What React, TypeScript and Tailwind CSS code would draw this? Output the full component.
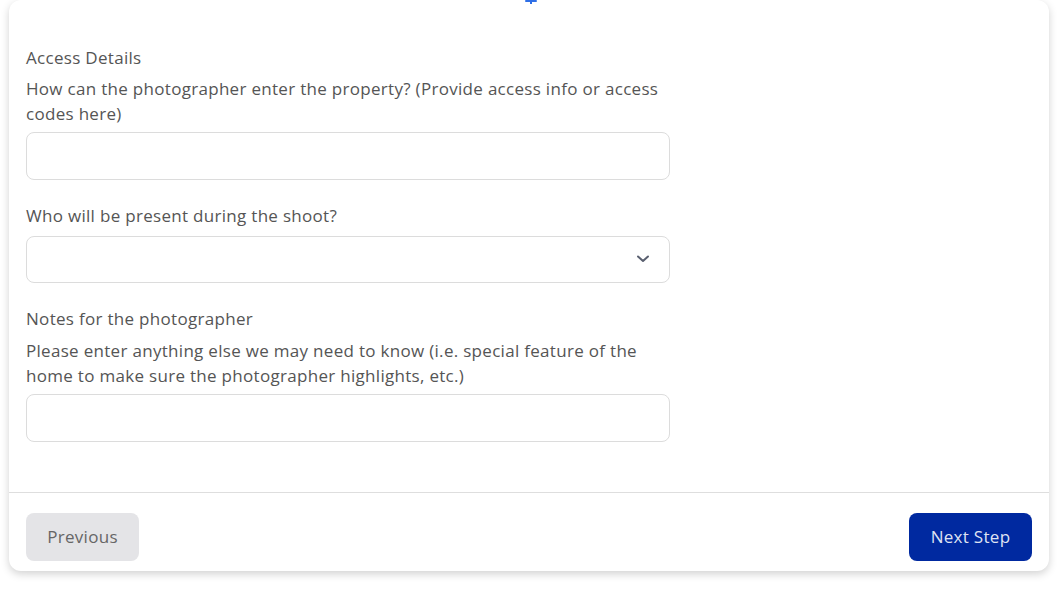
import React from 'react';

const font = { fontFamily: '"Open Sans", "Noto Sans", sans-serif' };

export default function App() {
  return (
    <div className="min-h-[589px] bg-white" style={font}>
      <div className="relative mx-[9px] w-[1040px] rounded-xl bg-white shadow-[0_3px_8px_rgba(0,0,0,0.18)]">
        <svg
          className="absolute left-[514px] top-0"
          width="16"
          height="4"
          viewBox="0 0 16 4"
        >
          <rect x="2" y="0" width="12" height="2" rx="1" fill="#2f6fe6" />
          <rect x="7" y="0" width="2" height="4" fill="#2f6fe6" />
        </svg>

        <div className="px-[17px] pt-[45px] pb-[50px] text-[17px] leading-[25px] tracking-[0.3px] text-[#555]">
          <div>Access Details</div>
          <p className="mt-[6px] w-[644px] whitespace-nowrap">
            How can the photographer enter the property? (Provide access info or access
            <br />
            codes here)
          </p>
          <input
            className="mt-[6px] block h-[48px] w-[644px] rounded-lg border border-[#dcdcdc] px-3 outline-none"
            type="text"
          />

          <div className="mt-[23px]">Who will be present during the shoot?</div>
          <div className="relative mt-[8px] h-[47px] w-[644px] rounded-lg border border-[#dcdcdc]">
            <svg
              className="absolute right-[19px] top-[17px]"
              width="14"
              height="10"
              viewBox="0 0 14 10"
              fill="none"
            >
              <path d="M2 2.5 L7 7 L12 2.5" stroke="#5a6070" strokeWidth="2" strokeLinecap="round" strokeLinejoin="round" />
            </svg>
          </div>

          <div className="mt-[23px]">Notes for the photographer</div>
          <p className="mt-[7px] w-[644px] whitespace-nowrap">
            Please enter anything else we may need to know (i.e. special feature of the
            <br />
            home to make sure the photographer highlights, etc.)
          </p>
          <input
            className="mt-[6px] block h-[48px] w-[644px] rounded-lg border border-[#dcdcdc] px-3 outline-none"
            type="text"
          />
        </div>

        <div className="flex items-center justify-between border-t border-[#dedede] px-[17px] pt-[20px] pb-[10px]">
          <button className="h-[48px] w-[113px] rounded-lg bg-[#e4e4e7] text-[17px] tracking-[0.3px] text-[#666]">
            Previous
          </button>
          <button className="h-[48px] w-[123px] rounded-lg bg-[#0029a0] text-[17px] tracking-[0.3px] text-[#dfe3f3]">
            Next Step
          </button>
        </div>
      </div>
    </div>
  );
}
